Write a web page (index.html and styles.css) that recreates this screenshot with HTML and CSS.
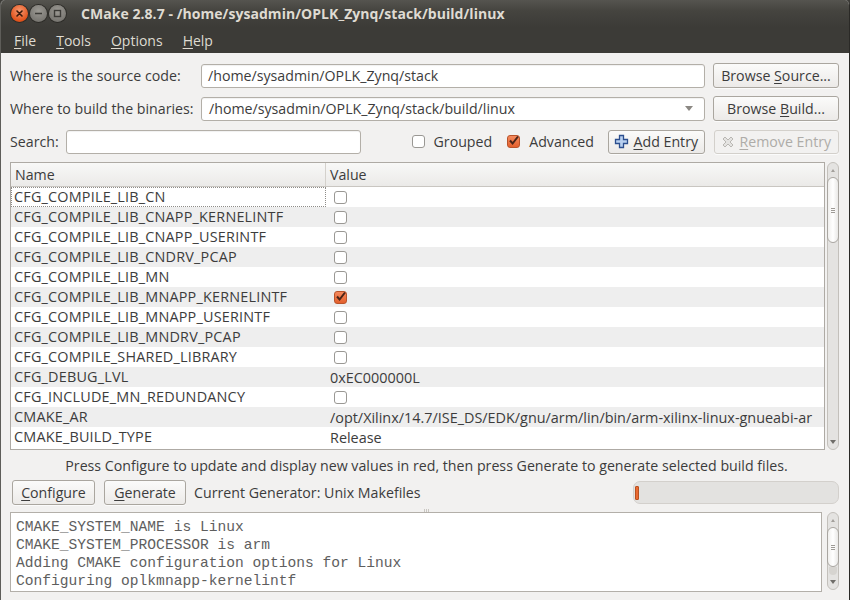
FILE: index.html
```html
<!DOCTYPE html>
<html>
<head>
<meta charset="utf-8">
<link rel="stylesheet" href="styles.css">
</head>
<body>
<div class="window">
  <div class="titlebar">
    <div class="wbtns">
      <span class="wb close"><svg width="17" height="17" viewBox="0 0 17 17"><path d="M6 6 L11 11 M11 6 L6 11" stroke="#3a1a0c" stroke-width="1.6" stroke-linecap="round"/></svg></span>
      <span class="wb grey"><svg width="17" height="17" viewBox="0 0 17 17"><path d="M5 8.5 H12" stroke="#3c3b37" stroke-width="1.6"/></svg></span>
      <span class="wb grey"><svg width="17" height="17" viewBox="0 0 17 17"><rect x="5.5" y="5.5" width="6" height="6" fill="none" stroke="#3c3b37" stroke-width="1.4"/></svg></span>
    </div>
    <div class="title">CMake 2.8.7 - /home/sysadmin/OPLK_Zynq/stack/build/linux</div>
  </div>
  <div class="menubar">
    <span class="mi"><u>F</u>ile</span>
    <span class="mi"><u>T</u>ools</span>
    <span class="mi"><u>O</u>ptions</span>
    <span class="mi"><u>H</u>elp</span>
  </div>
  <div class="content">
    <div class="row">
      <div class="lbl">Where is the source code:</div>
      <div class="field">/home/sysadmin/OPLK_Zynq/stack</div>
      <div class="btn browse"><span>Browse <u>S</u>ource...</span></div>
    </div>
    <div class="row">
      <div class="lbl">Where to build the binaries:</div>
      <div class="field combo"><span>/home/sysadmin/OPLK_Zynq/stack/build/linux</span><span class="arrow"></span></div>
      <div class="btn browse"><span>Browse <u>B</u>uild...</span></div>
    </div>
    <div class="row">
      <div class="lbl short">Search:</div>
      <div class="field search"></div>
      <div class="opt"><span class="cb"></span>Grouped</div>
      <div class="opt"><span class="cb on"><svg width="13" height="13" viewBox="0 0 13 13"><path d="M3 6.5 L5.6 9.5 L11 2.5" fill="none" stroke="#4a2418" stroke-width="2"/></svg></span>Advanced</div>
      <div class="btn add"><svg width="15" height="15" viewBox="0 0 15 15"><path d="M5.5 1.5 H9.5 V5.5 H13.5 V9.5 H9.5 V13.5 H5.5 V9.5 H1.5 V5.5 H5.5 Z" fill="#b9d0f0" stroke="#2d4f8e" stroke-width="1.3"/></svg><span><u>A</u>dd Entry</span></div>
      <div class="btn remove"><svg width="14" height="14" viewBox="0 0 14 14"><path d="M2 4 L4 2 L7 5 L10 2 L12 4 L9 7 L12 10 L10 12 L7 9 L4 12 L2 10 L5 7 Z" fill="#e4e3e1" stroke="#b9b7b3" stroke-width="1"/></svg><span><u>R</u>emove Entry</span></div>
    </div>
    <div class="tablewrap">
      <div class="grid">
        <div class="hdr"><div class="cname">Name</div><div class="cval">Value</div></div>
        <div class="tr focus"><div class="cname">CFG_COMPILE_LIB_CN</div><div class="cval"><span class="cb"></span></div></div>
        <div class="tr"><div class="cname">CFG_COMPILE_LIB_CNAPP_KERNELINTF</div><div class="cval"><span class="cb"></span></div></div>
        <div class="tr"><div class="cname">CFG_COMPILE_LIB_CNAPP_USERINTF</div><div class="cval"><span class="cb"></span></div></div>
        <div class="tr"><div class="cname">CFG_COMPILE_LIB_CNDRV_PCAP</div><div class="cval"><span class="cb"></span></div></div>
        <div class="tr"><div class="cname">CFG_COMPILE_LIB_MN</div><div class="cval"><span class="cb"></span></div></div>
        <div class="tr"><div class="cname">CFG_COMPILE_LIB_MNAPP_KERNELINTF</div><div class="cval"><span class="cb on"><svg width="13" height="13" viewBox="0 0 13 13"><path d="M3 6.5 L5.6 9.5 L11 2.5" fill="none" stroke="#4a2418" stroke-width="2"/></svg></span></div></div>
        <div class="tr"><div class="cname">CFG_COMPILE_LIB_MNAPP_USERINTF</div><div class="cval"><span class="cb"></span></div></div>
        <div class="tr"><div class="cname">CFG_COMPILE_LIB_MNDRV_PCAP</div><div class="cval"><span class="cb"></span></div></div>
        <div class="tr"><div class="cname">CFG_COMPILE_SHARED_LIBRARY</div><div class="cval"><span class="cb"></span></div></div>
        <div class="tr"><div class="cname">CFG_DEBUG_LVL</div><div class="cval">0xEC000000L</div></div>
        <div class="tr"><div class="cname">CFG_INCLUDE_MN_REDUNDANCY</div><div class="cval"><span class="cb"></span></div></div>
        <div class="tr"><div class="cname">CMAKE_AR</div><div class="cval">/opt/Xilinx/14.7/ISE_DS/EDK/gnu/arm/lin/bin/arm-xilinx-linux-gnueabi-ar</div></div>
        <div class="tr"><div class="cname">CMAKE_BUILD_TYPE</div><div class="cval">Release</div></div>
      </div>
      <div class="sb tall">
        <div class="sbarrow up"></div>
        <div class="thumb"><span class="grip"></span></div>
        <div class="sbspace"></div>
        <div class="sbarrow down"></div>
      </div>
    </div>
    <div class="status">Press Configure to update and display new values in red, then press Generate to generate selected build files.</div>
    <div class="actions">
      <div class="btn act"><span><u>C</u>onfigure</span></div>
      <div class="btn act"><span><u>G</u>enerate</span></div>
      <div class="gen">Current Generator: Unix Makefiles</div>
      <div class="progress"><span class="fill"></span></div>
    </div>
    <div class="splitter"><span></span><span></span><span></span></div>
    <div class="outwrap">
      <div class="output">CMAKE_SYSTEM_NAME is Linux
CMAKE_SYSTEM_PROCESSOR is arm
Adding CMAKE configuration options for Linux
Configuring oplkmnapp-kernelintf</div>
      <div class="sb short">
        <div class="sbarrow up"></div>
        <div class="thumb small"><span class="grip"></span></div>
        <div class="sbspace dark"></div>
        <div class="sbarrow down"></div>
      </div>
    </div>
  </div>
</div>
</body>
</html>
```

FILE: styles.css
```css
* { box-sizing: border-box; }
html, body { margin: 0; padding: 0; }
body { width: 850px; height: 600px; overflow: hidden; background: #3c3b37; font-family: "Open Sans", "DejaVu Sans", sans-serif; }
u { text-decoration: underline; text-underline-offset: 2px; text-decoration-thickness: 1px; }

.window { width: 850px; height: 600px; display: flex; flex-direction: column; background: #f2f1f0; border-radius: 5px 5px 0 0; overflow: hidden; border-left: 1px solid #5e5d59; border-right: 1px solid #2a2926; }

.titlebar { height: 27px; display: flex; align-items: center; background: linear-gradient(#55544f, #45443f 40%, #3c3b37); padding-left: 10px; }
.wbtns { display: flex; gap: 2px; }
.wb { width: 17px; height: 17px; border-radius: 50%; display: block; }
.wb svg { display: block; }
.wb.close { background: radial-gradient(circle at 50% 35%, #f79a72, #e2531c 70%, #b8410f); box-shadow: 0 0 0 1px #2d2c28; }
.wb.grey { background: radial-gradient(circle at 50% 35%, #9c9a94, #7a7873 70%, #5f5e5a); box-shadow: 0 0 0 1px #2d2c28; }
.title { margin-left: 15px; color: #dfdbd2; font-weight: bold; font-size: 14px; letter-spacing: 0.05px; }

.menubar { height: 26px; background: #3c3b37; display: flex; align-items: center; padding-left: 3px; }
.mi { color: #dfdbd2; font-size: 14px; padding: 0 10px; margin-right: 0; }

.content { flex: 1; display: flex; flex-direction: column; padding: 10px 10px 0 9px; color: #3c3c3c; font-size: 14.2px; }

.row { display: flex; align-items: center; height: 25px; margin-bottom: 8px; }
.lbl { width: 191px; padding-left: 0; }
.lbl.short { width: 56px; }
.field { height: 24px; width: 504px; background: #fff; border: 1px solid #b3afa8; border-radius: 3px; padding: 0 6px; line-height: 22px; box-shadow: inset 0 1px 1px rgba(0,0,0,0.06); }
.field.combo { display: flex; justify-content: space-between; align-items: center; padding-left: 7px; }
.arrow { width: 0; height: 0; border-left: 4px solid transparent; border-right: 4px solid transparent; border-top: 5px solid #8b8883; margin-right: 5px; }
.field.search { width: 296px; }

.btn { height: 25px; border: 1px solid #aaa69f; border-radius: 3px; background: linear-gradient(#fbfbfa, #eceae8); display: flex; align-items: center; justify-content: center; box-shadow: 0 1px 0 rgba(255,255,255,0.7); }
.btn.browse { width: 126px; margin-left: 8px; }
.opt { display: flex; align-items: center; gap: 9px; margin-left: 51px; }
.opt + .opt { margin-left: 15px; }
.btn.add { width: 97px; margin-left: 14px; gap: 4px; height: 24px; }
.btn.remove { width: 126px; margin-left: 9px; gap: 4px; color: #aeaca8; border-color: #d3d0cb; background: #f2f1f0; height: 24px; }

.cb { width: 13px; height: 13px; border: 1px solid #9a9894; border-radius: 3px; background: #fff; display: inline-block; position: relative; }
.cb.on { background: linear-gradient(#f58a5e, #e4602c); border-color: #b9532a; }
.cb svg { position: absolute; left: -1px; top: -2px; }

.tablewrap { height: 288px; display: flex; gap: 2px; }
.grid { width: 816px; border: 1px solid #aeaaa4; background: #fff; overflow: hidden; font-size: 14.4px; }
.hdr { height: 24px; display: flex; background: linear-gradient(#f8f8f7, #ebeae8); border-bottom: 1px solid #c9c6c1; font-size: 14.2px; }
.hdr .cname { padding-left: 4px; border-right: 1px solid #d4d1cc; letter-spacing: 0; }
.hdr .cname, .hdr .cval { line-height: 23px; }
.tr { height: 20px; display: flex; align-items: center; }
.tr:nth-child(odd) { background: #eeeeee; }
.cname { width: 315px; padding-left: 3px; white-space: nowrap; }
.tr .cname { letter-spacing: 0.2px; }
.cval { padding-left: 4px; white-space: nowrap; display: flex; align-items: center; }
.tr .cval .cb { margin-left: 4px; }
.tr .cname { line-height: 20px; height: 20px; }
.tr.focus .cname { border: 1px dotted #8e8c88; line-height: 18px; padding-left: 2px; }

.sb { width: 12px; border: 1px solid #c3c0bb; border-radius: 6px; background: #e4e3e1; display: flex; flex-direction: column; }
.sb.tall { height: 288px; }
.sb.short { height: 78px; }
.sbarrow { height: 14px; display: flex; justify-content: center; align-items: center; }
.sbarrow.up::after { content: ""; border-left: 2px solid transparent; border-right: 2px solid transparent; border-bottom: 3px solid #a3a09b; }
.sbarrow.down::after { content: ""; border-left: 3px solid transparent; border-right: 3px solid transparent; border-top: 4px solid #6f6d69; }
.thumb { height: 66px; margin: 0 -1px; border: 1px solid #a9a6a1; border-radius: 6px; background: linear-gradient(90deg, #f0efed, #ffffff 50%, #e9e8e6); display: flex; align-items: center; justify-content: center; }
.thumb.small { height: 40px; }
.grip { width: 4px; height: 5px; border-top: 1px solid #9d9a95; border-bottom: 1px solid #9d9a95; position: relative; }
.grip::after { content: ""; position: absolute; left: 0; right: 0; top: 1px; border-top: 1px solid #9d9a95; }
.sbspace { flex: 1; }
.sbspace.dark { background: #d6d4d0; margin: 0 1px 0; border-radius: 0 0 5px 5px; }

.status { height: 30px; display: flex; align-items: center; justify-content: center; padding-left: 4px; letter-spacing: 0; }

.actions { height: 25px; display: flex; align-items: center; }
.btn.act { margin-left: 2px; width: 83px; }
.btn.act + .btn.act { margin-left: 9px; width: 82px; }
.gen { margin-left: 8px; }
.progress { margin-left: auto; width: 206px; height: 23px; border: 1px solid #d3d0cc; border-radius: 7px; background: #e3e2e0; display: flex; align-items: center; padding-left: 1px; }
.fill { width: 4px; height: 14px; background: #ea6a32; border: 1px solid #b9501f; border-radius: 1px; }

.splitter { height: 7px; display: flex; justify-content: center; align-items: flex-end; gap: 1px; padding-left: 4px; }
.splitter span { width: 1px; height: 3px; background: #c9c6c1; }

.outwrap { display: flex; gap: 5px; }
.output { width: 814px; height: 80px; border: 1px solid #b3afa9; background: #fff; font-family: "Liberation Mono", monospace; font-size: 14.6px; line-height: 18px; white-space: pre; padding: 5px 0 0 5px; color: #5e5e5e; }
```
